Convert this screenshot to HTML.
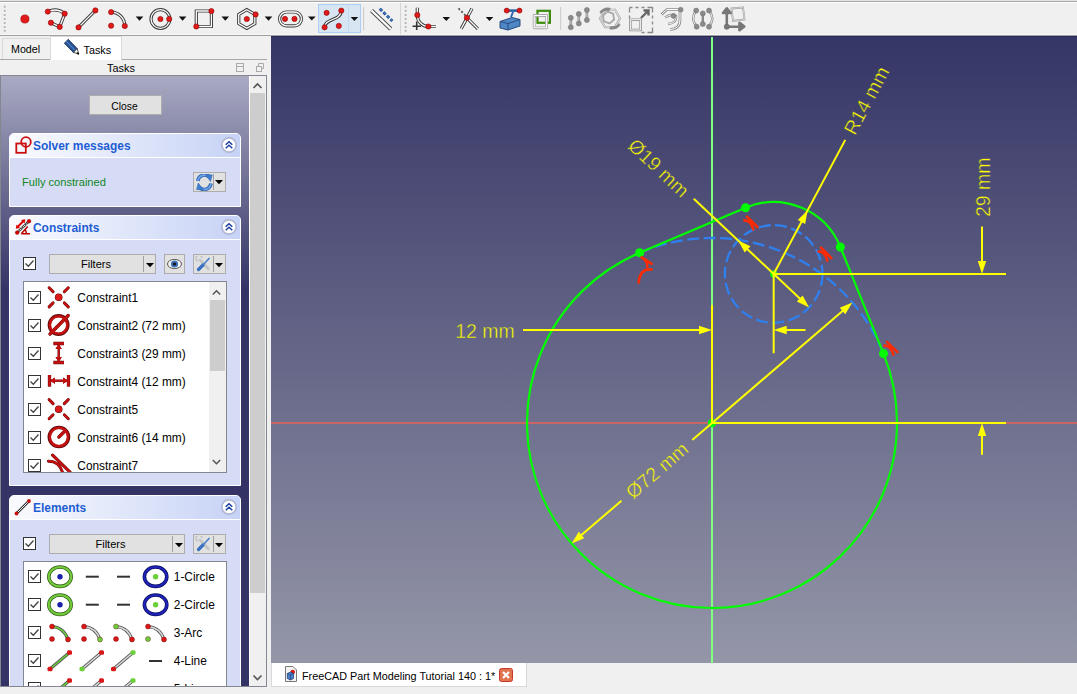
<!DOCTYPE html><html><head><meta charset="utf-8"><style>
*{margin:0;padding:0;box-sizing:border-box}
html,body{width:1077px;height:694px;overflow:hidden;background:#f0f0f0;font-family:"Liberation Sans",sans-serif;font-size:11px;color:#000}
.a{position:absolute}
.t{position:absolute;white-space:nowrap;line-height:1}
</style></head><body><div class="a" style="left:0;top:0;width:1077px;height:1px;background:#e2e2e2"></div>
<div class="a" style="left:0;top:1px;width:1077px;height:1px;background:#a8a8a8"></div>
<div class="a" style="left:0;top:2px;width:1077px;height:1px;background:#ffffff"></div>
<div class="a" style="left:0;top:34px;width:1077px;height:1px;background:#f8f8f8"></div>
<div class="a" style="left:0;top:35px;width:1077px;height:1px;background:#a0a0a0"></div>
<svg class="a" style="left:0;top:0" width="760" height="36" viewBox="0 0 760 36">
<rect x="3.8" y="5.8" width="1.8" height="1.8" fill="#b0b0b0"/>
<rect x="3.8" y="9.899999999999999" width="1.8" height="1.8" fill="#b0b0b0"/>
<rect x="3.8" y="14.1" width="1.8" height="1.8" fill="#b0b0b0"/>
<rect x="3.8" y="18.2" width="1.8" height="1.8" fill="#b0b0b0"/>
<rect x="3.8" y="22.099999999999998" width="1.8" height="1.8" fill="#b0b0b0"/>
<rect x="3.8" y="26.099999999999998" width="1.8" height="1.8" fill="#b0b0b0"/>
<rect x="3.8" y="29.9" width="1.8" height="1.8" fill="#b0b0b0"/>
<rect x="404.7" y="5.8" width="1.8" height="1.8" fill="#b0b0b0"/>
<rect x="404.7" y="9.899999999999999" width="1.8" height="1.8" fill="#b0b0b0"/>
<rect x="404.7" y="14.1" width="1.8" height="1.8" fill="#b0b0b0"/>
<rect x="404.7" y="18.2" width="1.8" height="1.8" fill="#b0b0b0"/>
<rect x="404.7" y="22.099999999999998" width="1.8" height="1.8" fill="#b0b0b0"/>
<rect x="404.7" y="26.099999999999998" width="1.8" height="1.8" fill="#b0b0b0"/>
<rect x="404.7" y="29.9" width="1.8" height="1.8" fill="#b0b0b0"/>
<circle cx="24.9" cy="19" r="4.1" fill="#e21a1a" stroke="#a00000" stroke-width="0.6"/>
<path d="M47.8,11.6 Q57,7.5 64.7,13.7 L59.7,26.9 L50.9,22.7" fill="none" stroke="#3a3a3a" stroke-width="3.2" stroke-linejoin="round"/><path d="M47.8,11.6 Q57,7.5 64.7,13.7 L59.7,26.9 L50.9,22.7" fill="none" stroke="#ffffff" stroke-width="1.3" stroke-linejoin="round"/>
<circle cx="47.8" cy="11.6" r="2.6" fill="#e21a1a" stroke="#8a0000" stroke-width="0.6"/>
<circle cx="64.7" cy="13.7" r="2.6" fill="#e21a1a" stroke="#8a0000" stroke-width="0.6"/>
<circle cx="59.7" cy="26.9" r="2.6" fill="#e21a1a" stroke="#8a0000" stroke-width="0.6"/>
<circle cx="50.9" cy="22.7" r="2.6" fill="#e21a1a" stroke="#8a0000" stroke-width="0.6"/>
<path d="M78.5,27.4 L95.4,10.4" fill="none" stroke="#3a3a3a" stroke-width="3.2" stroke-linejoin="round"/><path d="M78.5,27.4 L95.4,10.4" fill="none" stroke="#ffffff" stroke-width="1.3" stroke-linejoin="round"/>
<circle cx="78.5" cy="27.4" r="2.6" fill="#e21a1a" stroke="#8a0000" stroke-width="0.6"/>
<circle cx="95.4" cy="10.4" r="2.6" fill="#e21a1a" stroke="#8a0000" stroke-width="0.6"/>
<path d="M111.1,12.1 A13.8,13.8 0 0 1 124.8,26" fill="none" stroke="#3a3a3a" stroke-width="3.2" stroke-linejoin="round"/><path d="M111.1,12.1 A13.8,13.8 0 0 1 124.8,26" fill="none" stroke="#ffffff" stroke-width="1.3" stroke-linejoin="round"/>
<circle cx="111.1" cy="12.1" r="2.6" fill="#e21a1a" stroke="#8a0000" stroke-width="0.6"/>
<circle cx="111.1" cy="25.7" r="2.6" fill="#e21a1a" stroke="#8a0000" stroke-width="0.6"/>
<circle cx="124.8" cy="26" r="2.6" fill="#e21a1a" stroke="#8a0000" stroke-width="0.6"/>
<polygon points="135.7,16.6 143.3,16.6 139.5,20.8" fill="#111"/>
<circle cx="160.4" cy="19" r="9.4" fill="none" stroke="#3a3a3a" stroke-width="3.2"/><circle cx="160.4" cy="19" r="9.4" fill="none" stroke="#fff" stroke-width="1.3"/>
<circle cx="160.4" cy="19" r="2.6" fill="#e21a1a" stroke="#8a0000" stroke-width="0.6"/>
<circle cx="169.2" cy="19" r="2.6" fill="#e21a1a" stroke="#8a0000" stroke-width="0.6"/>
<polygon points="178.79999999999998,16.6 186.4,16.6 182.6,20.8" fill="#111"/>
<path d="M196.3,11 L211.4,11 L211.4,26.5 L196.3,26.5 Z" fill="none" stroke="#3a3a3a" stroke-width="3.2" stroke-linejoin="miter"/><path d="M196.3,11 L211.4,11 L211.4,26.5 L196.3,26.5 Z" fill="none" stroke="#ffffff" stroke-width="1.3" stroke-linejoin="miter"/>
<circle cx="211.4" cy="11.1" r="2.6" fill="#e21a1a" stroke="#8a0000" stroke-width="0.6"/>
<circle cx="196.3" cy="26.5" r="2.6" fill="#e21a1a" stroke="#8a0000" stroke-width="0.6"/>
<polygon points="221.5,16.6 229.10000000000002,16.6 225.3,20.8" fill="#111"/>
<polygon points="246.80,9.70 254.85,14.35 254.85,23.65 246.80,28.30 238.75,23.65 238.75,14.35" fill="none" stroke="#3a3a3a" stroke-width="3.2"/><polygon points="246.80,9.70 254.85,14.35 254.85,23.65 246.80,28.30 238.75,23.65 238.75,14.35" fill="none" stroke="#fff" stroke-width="1.3"/>
<circle cx="246.8" cy="19" r="2.6" fill="#e21a1a" stroke="#8a0000" stroke-width="0.6"/>
<circle cx="255.6" cy="14.4" r="2.6" fill="#e21a1a" stroke="#8a0000" stroke-width="0.6"/>
<polygon points="264.7,16.6 272.3,16.6 268.5,20.8" fill="#111"/>
<path d="M286.5,12 L294.5,12 A6.9,6.9 0 0 1 294.5,25.8 L286.5,25.8 A6.9,6.9 0 0 1 286.5,12 Z" fill="none" stroke="#3a3a3a" stroke-width="3.2" stroke-linejoin="round"/><path d="M286.5,12 L294.5,12 A6.9,6.9 0 0 1 294.5,25.8 L286.5,25.8 A6.9,6.9 0 0 1 286.5,12 Z" fill="none" stroke="#ffffff" stroke-width="1.3" stroke-linejoin="round"/>
<circle cx="285" cy="18.9" r="2.6" fill="#e21a1a" stroke="#8a0000" stroke-width="0.6"/>
<circle cx="294.5" cy="18.9" r="2.6" fill="#e21a1a" stroke="#8a0000" stroke-width="0.6"/>
<polygon points="308.0,16.4 315.6,16.4 311.8,20.599999999999998" fill="#111"/>
<rect x="318.5" y="4.5" width="42" height="28" fill="#d8e6f3" stroke="#a9d0f2" stroke-width="1"/>
<line x1="348.5" y1="5" x2="348.5" y2="32" stroke="#bfdcf4" stroke-width="1"/>
<path d="M324.6,27.3 C325,18 341,21 341.3,10.6" fill="none" stroke="#3a3a3a" stroke-width="3.2" stroke-linejoin="round"/><path d="M324.6,27.3 C325,18 341,21 341.3,10.6" fill="none" stroke="#ffffff" stroke-width="1.3" stroke-linejoin="round"/>
<circle cx="326.6" cy="12.8" r="2.6" fill="#e21a1a" stroke="#8a0000" stroke-width="0.6"/>
<circle cx="341.3" cy="10.6" r="2.6" fill="#e21a1a" stroke="#8a0000" stroke-width="0.6"/>
<circle cx="324.6" cy="27.3" r="2.6" fill="#e21a1a" stroke="#8a0000" stroke-width="0.6"/>
<circle cx="338.8" cy="25.9" r="2.6" fill="#e21a1a" stroke="#8a0000" stroke-width="0.6"/>
<polygon points="350.59999999999997,16.9 358.2,16.9 354.4,21.099999999999998" fill="#111"/>
<line x1="363.6" y1="7" x2="363.6" y2="30" stroke="#c8c8c8" stroke-width="1"/>
<path d="M371.5,10.5 L390.8,29" fill="none" stroke="#4a4a4a" stroke-width="4.2" stroke-linejoin="round"/><path d="M371.5,10.5 L390.8,29" fill="none" stroke="#ffffff" stroke-width="2.4" stroke-linejoin="round"/>
<line x1="379.8" y1="8.8" x2="392.3" y2="21" stroke="#24498a" stroke-width="3" stroke-dasharray="3.2,1.8"/><line x1="379.8" y1="8.8" x2="392.3" y2="21" stroke="#3f78c8" stroke-width="1.4" stroke-dasharray="3.2,1.8"/>
<line x1="400.5" y1="3" x2="400.5" y2="34" stroke="#d4d4d4" stroke-width="1"/>
<path d="M417.3,7.8 L417.3,15 A11.3,11.3 0 0 0 428.4,26.5 L435.7,26.5" fill="none" stroke="#3a3a3a" stroke-width="3.2" stroke-linejoin="round"/><path d="M417.3,7.8 L417.3,15 A11.3,11.3 0 0 0 428.4,26.5 L435.7,26.5" fill="none" stroke="#ffffff" stroke-width="1.3" stroke-linejoin="round"/>
<circle cx="417.3" cy="15" r="2.6" fill="#e21a1a" stroke="#8a0000" stroke-width="0.6"/>
<circle cx="428.4" cy="26.5" r="2.6" fill="#e21a1a" stroke="#8a0000" stroke-width="0.6"/>
<path d="M416.7,21.5 V30 M412.5,26.2 H421" stroke="#333" stroke-width="1.6"/>
<polygon points="442.5,16.9 450.1,16.9 446.3,21.099999999999998" fill="#111"/>
<path d="M472,8.6 L461.2,28.8" fill="none" stroke="#3a3a3a" stroke-width="3.2" stroke-linejoin="round"/><path d="M472,8.6 L461.2,28.8" fill="none" stroke="#ffffff" stroke-width="1.3" stroke-linejoin="round"/>
<path d="M466.9,17.8 L477.8,28.8" fill="none" stroke="#3a3a3a" stroke-width="3.2" stroke-linejoin="round"/><path d="M466.9,17.8 L477.8,28.8" fill="none" stroke="#ffffff" stroke-width="1.3" stroke-linejoin="round"/>
<path d="M458.5,8.4 L466,16" stroke="#555" stroke-width="1.8" stroke-dasharray="2,2"/>
<circle cx="466.9" cy="17.8" r="2.6" fill="#e21a1a" stroke="#8a0000" stroke-width="0.6"/>
<polygon points="485.7,16.9 493.3,16.9 489.5,21.099999999999998" fill="#111"/>
<rect x="507" y="9.3" width="12.5" height="2.6" fill="#2e62a8"/>
<path d="M513,12 L511,17" stroke="#2e62a8" stroke-width="2"/>
<path d="M500,21.5 L512,17.5 L520,19.5 L520,26 L508,30 L500,28 Z" fill="#4f86c6" stroke="#1e3f73" stroke-width="0.9"/>
<path d="M500,21.5 L508,23.5 L520,19.5 M508,23.5 L508,30" fill="none" stroke="#1e3f73" stroke-width="0.8"/>
<circle cx="506.7" cy="10.6" r="2.5" fill="#e21a1a" stroke="#8a0000" stroke-width="0.6"/>
<circle cx="519.5" cy="10.6" r="2.5" fill="#e21a1a" stroke="#8a0000" stroke-width="0.6"/>
<rect x="537.5" y="10.8" width="12.4" height="12" fill="none" stroke="#3b8c0b" stroke-width="2.2"/>
<path d="M534.2,15.5 L546.6,15.5 L546.6,27.8 L534.2,27.8 Z" fill="none" stroke="#a8a8a8" stroke-width="2.8" stroke-linejoin="round"/><path d="M534.2,15.5 L546.6,15.5 L546.6,27.8 L534.2,27.8 Z" fill="none" stroke="#ffffff" stroke-width="1.1" stroke-linejoin="round"/>
<line x1="560.7" y1="7" x2="560.7" y2="30" stroke="#c8c8c8" stroke-width="1"/>
<line x1="570.8" y1="17.8" x2="570.8" y2="27.3" stroke="#8a8a8a" stroke-width="2.6"/><line x1="570.8" y1="17.8" x2="570.8" y2="27.3" stroke="#ddd" stroke-width="0.8"/>
<circle cx="570.8" cy="17.8" r="2.5" fill="#8a8a8a" stroke="#777" stroke-width="0.6"/>
<circle cx="570.8" cy="27.3" r="2.5" fill="#8a8a8a" stroke="#777" stroke-width="0.6"/>
<line x1="578.8" y1="13.9" x2="578.8" y2="23.4" stroke="#8a8a8a" stroke-width="2.6"/><line x1="578.8" y1="13.9" x2="578.8" y2="23.4" stroke="#ddd" stroke-width="0.8"/>
<circle cx="578.8" cy="13.9" r="2.5" fill="#8a8a8a" stroke="#777" stroke-width="0.6"/>
<circle cx="578.8" cy="23.4" r="2.5" fill="#8a8a8a" stroke="#777" stroke-width="0.6"/>
<line x1="586.9" y1="10" x2="586.9" y2="20" stroke="#8a8a8a" stroke-width="2.6"/><line x1="586.9" y1="10" x2="586.9" y2="20" stroke="#ddd" stroke-width="0.8"/>
<circle cx="586.9" cy="10" r="2.5" fill="#8a8a8a" stroke="#777" stroke-width="0.6"/>
<circle cx="586.9" cy="20" r="2.5" fill="#8a8a8a" stroke="#777" stroke-width="0.6"/>
<polygon points="620.00,18.40 615.00,27.06 605.00,27.06 600.00,18.40 605.00,9.74 615.00,9.74" fill="none" stroke="#a8a8a8" stroke-width="2.2"/><polygon points="620.00,18.40 615.00,27.06 605.00,27.06 600.00,18.40 605.00,9.74 615.00,9.74" fill="none" stroke="#f4f4f4" stroke-width="0.8"/>
<polygon points="614.14,19.55 609.54,23.41 603.90,21.36 602.86,15.45 607.46,11.59 613.10,13.64" fill="none" stroke="#a8a8a8" stroke-width="1.8"/>
<path d="M599.5,12 Q604,6 611,8 L609,11 Q604,10 601,14 Z" fill="#888"/><path d="M620.5,25 Q616,31 609,29 L611,26 Q616,27 619,23 Z" fill="#888"/>
<path d="M629.5,7.5 h3 m3,0 h3 m3,0 h3 m3,0 h5 v5 m0,3 v3 m0,3 v3 m0,3 v5 h-5 m-3,0 h-3 M629.5,7.5 v5 m0,3 v3" fill="none" stroke="#888" stroke-width="1.3"/>
<path d="M630.3,19.7 H640.7 V30 H630.3 Z" fill="none" stroke="#8a8a8a" stroke-width="2.6" stroke-linejoin="round"/><path d="M630.3,19.7 H640.7 V30 H630.3 Z" fill="none" stroke="#ffffff" stroke-width="1.0" stroke-linejoin="round"/>
<path d="M641,18 L647.5,11.5 M643.5,10.5 H648.5 V15.5" fill="none" stroke="#666" stroke-width="2.4"/>
<path d="M661.5,14.5 L667,9.5 H680 V20 Q680,29 670,29.5" fill="none" stroke="#8a8a8a" stroke-width="2.6" stroke-linejoin="round"/><path d="M661.5,14.5 L667,9.5 H680 V20 Q680,29 670,29.5" fill="none" stroke="#ffffff" stroke-width="1.0" stroke-linejoin="round"/>
<path d="M665,17.5 Q672,13 676,16 Q677,23 668,24" fill="none" stroke="#8a8a8a" stroke-width="2.4" stroke-linejoin="round"/><path d="M665,17.5 Q672,13 676,16 Q677,23 668,24" fill="none" stroke="#ffffff" stroke-width="0.9" stroke-linejoin="round"/>
<circle cx="680.7" cy="9.7" r="2.4" fill="#8a8a8a" stroke="#777" stroke-width="0.6"/>
<circle cx="673.5" cy="16" r="2.4" fill="#8a8a8a" stroke="#777" stroke-width="0.6"/>
<path d="M696.2,10.6 Q690,18.6 696.7,26.7" fill="none" stroke="#8a8a8a" stroke-width="2.4" stroke-linejoin="round"/><path d="M696.2,10.6 Q690,18.6 696.7,26.7" fill="none" stroke="#ffffff" stroke-width="0.9" stroke-linejoin="round"/>
<path d="M709,10.6 Q715.5,18.6 709,26.7" fill="none" stroke="#8a8a8a" stroke-width="2.4" stroke-linejoin="round"/><path d="M709,10.6 Q715.5,18.6 709,26.7" fill="none" stroke="#ffffff" stroke-width="0.9" stroke-linejoin="round"/>
<line x1="702.8" y1="13.4" x2="702.8" y2="24" stroke="#8a8a8a" stroke-width="2.4"/>
<circle cx="696.2" cy="10.6" r="2.5" fill="#8a8a8a" stroke="#777" stroke-width="0.6"/>
<circle cx="709" cy="10.6" r="2.5" fill="#8a8a8a" stroke="#777" stroke-width="0.6"/>
<circle cx="702.8" cy="13.4" r="2.5" fill="#8a8a8a" stroke="#777" stroke-width="0.6"/>
<circle cx="702.8" cy="24" r="2.5" fill="#8a8a8a" stroke="#777" stroke-width="0.6"/>
<circle cx="696.7" cy="26.7" r="2.5" fill="#8a8a8a" stroke="#777" stroke-width="0.6"/>
<circle cx="709" cy="26.7" r="2.5" fill="#8a8a8a" stroke="#777" stroke-width="0.6"/>
<path d="M731.5,8.5 L743,7.5 L744.5,19.5 L733,21 Z" fill="none" stroke="#9a9a9a" stroke-width="1.8"/><path d="M731.5,8.5 L743,7.5 L744.5,19.5 L733,21 Z" fill="none" stroke="#f4f4f4" stroke-width="0.6"/>
<path d="M726.8,26.7 V12 M723,13 L726.8,8.3 L730.6,13 Z M726.8,26.7 H740 M739.5,22.8 L744.3,26.5 L739.5,30.2 Z" fill="#777" stroke="#777" stroke-width="2.6" stroke-linejoin="round"/>
<circle cx="726.8" cy="26.7" r="2.6" fill="#777" stroke="#666" stroke-width="0.6"/>
</svg>
<div class="a" style="left:271px;top:36px;width:806px;height:627px;background:linear-gradient(#353566,#9496a8)"></div>
<div class="a" style="left:271px;top:36px;width:806px;height:1px;background:#2a2a5c"></div>
<div class="a" style="left:271px;top:663px;width:256px;height:24px;background:#fff;border:1px solid #d9d9d9;border-top:none"></div>
<div class="t" style="left:302px;top:671px;font-size:10.8px;color:#000">FreeCAD Part Modeling Tutorial 140 : 1*</div>
<svg class="a" style="left:284px;top:665px" width="14" height="18" viewBox="284 665 14 18"><path d="M285.5,666.5 H293 L296.5,670 V681.5 H285.5 Z" fill="#f4f4f4" stroke="#777" stroke-width="1"/><circle cx="292.7" cy="672" r="2.3" fill="#e01818"/><path d="M287.3,673.5 L290.5,672 L293.5,673.5 V678.5 L290.5,680 L287.3,678.5 Z" fill="#4a7fcc" stroke="#1a3563" stroke-width="0.7"/><path d="M287.3,673.5 L290.5,675 L293.5,673.5 M290.5,675 V680" fill="none" stroke="#1a3563" stroke-width="0.6"/></svg>
<svg class="a" style="left:498px;top:667px" width="16" height="16" viewBox="498 667 16 16"><rect x="499.5" y="668.5" width="13" height="13" rx="2" fill="#e0744e" stroke="#c8382a" stroke-width="1"/><path d="M503,672 L509,678 M509,672 L503,678" stroke="#fff" stroke-width="2.2"/></svg>
<div class="a" style="left:0;top:59px;width:267px;height:1px;background:#a9a9a9"></div>
<div class="a" style="left:2px;top:38px;width:49px;height:21px;background:#f0f0f0;border:1px solid #d9d9d9;border-bottom:none"></div>
<div class="a" style="left:50px;top:36px;width:72px;height:24px;background:#fff;border:1px solid #d9d9d9;border-bottom:none"></div>
<div class="t" style="left:11px;top:44px;font-size:10.7px">Model</div>
<div class="t" style="left:83.5px;top:44.6px;font-size:10.8px">Tasks</div>
<svg class="a" style="left:62px;top:37px" width="20" height="20" viewBox="62 37 20 20"><path d="M64.3,43.2 L68.3,39.3 L77.2,48.6 L73.4,52.4 Z" fill="#2a5596" stroke="#14284a" stroke-width="0.8"/><path d="M66.3,41.3 L75.2,50.5" stroke="#5b8fd6" stroke-width="1"/><path d="M73.4,52.4 L77.2,48.6 L78.8,54 Z" fill="#fff" stroke="#222" stroke-width="0.8"/><path d="M77.3,52.6 L78.8,54 L77.4,53.8 Z" fill="#000" stroke="#000" stroke-width="1"/></svg>
<div class="t" style="left:107px;top:62.5px;font-size:10.9px">Tasks</div>
<svg class="a" style="left:234px;top:60px" width="30" height="14" viewBox="234 60 30 14"><rect x="236.5" y="63.5" width="7" height="8" fill="none" stroke="#aaa" stroke-width="1"/><line x1="236.5" y1="66.5" x2="243.5" y2="66.5" stroke="#aaa"/><rect x="256.5" y="66.5" width="5" height="5" fill="none" stroke="#aaa"/><path d="M258.5,66.5 V63.5 H263.5 V68.5 H261.5" fill="none" stroke="#aaa"/></svg>
<div class="a" style="left:0;top:75px;width:267px;height:612px;border:1px solid #828790;background:linear-gradient(#a9aac2 0px,#333366 214px,#333366 612px)"></div>
<div class="a" style="left:249px;top:76px;width:17px;height:610px;background:#f0f0f0;border-left:1px solid #fff"></div>
<div class="a" style="left:250px;top:93px;width:15px;height:500px;background:#cdcdcd"></div>
<svg class="a" style="left:251px;top:80px" width="13" height="12" viewBox="251 80 13 12"><path d="M253.5,88 L257.5,84 L261.5,88" fill="none" stroke="#555" stroke-width="1.6"/></svg>
<svg class="a" style="left:251px;top:672px" width="13" height="12" viewBox="251 672 13 12"><path d="M253.5,675.5 L257.5,679.5 L261.5,675.5" fill="none" stroke="#555" stroke-width="1.6"/></svg>
<div class="a" style="left:1px;top:76px;width:248px;height:610px;overflow:hidden"><div class="a" style="left:-1px;top:-76px;width:267px;height:700px">
<div class="a" style="left:89px;top:95px;width:73px;height:20px;background:#e1e1e1;border:1px solid #adadad"></div>
<div class="t" style="left:88px;top:101.6px;width:73px;text-align:center;font-size:10.3px">Close</div>
<div class="a" style="left:9px;top:133px;width:232px;height:74px;background:#d6dcf5;border:1px solid #fff;border-radius:5px 5px 0 0"></div><div class="a" style="left:10px;top:134px;width:230px;height:24px;background:linear-gradient(90deg,#fafbfe,#c7d3f6);border-radius:4px 4px 0 0;border-bottom:1px solid #fff"></div><div class="t" style="left:33px;top:141.1px;font-size:11.95px;font-weight:bold;color:#1e5dd3">Solver messages</div><svg class="a" style="left:220px;top:136.4px" width="18" height="18" viewBox="220 136.4 18 18"><circle cx="229" cy="145.4" r="7.2" fill="#fff" stroke="#b4bbd8" stroke-width="1.9"/><path d="M225.7,145.1 L229,142.1 L232.3,145.1 M225.7,148.6 L229,145.6 L232.3,148.6" fill="none" stroke="#1b3fa0" stroke-width="1.5"/></svg><svg class="a" style="left:14px;top:136px" width="18" height="18" viewBox="14 136 18 18"><rect x="16.3" y="143.5" width="9.5" height="9.3" fill="none" stroke="#cc1010" stroke-width="1.8"/><circle cx="26" cy="142" r="4.8" fill="none" stroke="#cc1010" stroke-width="1.8"/></svg>
<div class="t" style="left:22px;top:177px;font-size:11.1px;color:#0f8626">Fully constrained</div>
<div class="a" style="left:193px;top:172px;width:33px;height:20px;background:#e1e1e1;border:1px solid #adadad"></div>
<div class="a" style="left:213px;top:174px;width:1px;height:16px;background:#a0a0a0"></div>
<svg class="a" style="left:195px;top:174px" width="18" height="17" viewBox="195 174 18 17"><path d="M197.8,181 A6.8,6.8 0 0 1 209.5,177.2" fill="none" stroke="#2e64b4" stroke-width="3.6"/><path d="M197.8,181 A6.8,6.8 0 0 1 209.5,177.2" fill="none" stroke="#6fa3e6" stroke-width="1.8"/><polygon points="205.5,174.5 212.2,175 210.5,181.5" fill="#3f7fd0" stroke="#2e64b4" stroke-width="0.6"/><path d="M211,183.5 A6.8,6.8 0 0 1 199.3,187.3" fill="none" stroke="#2e64b4" stroke-width="3.6"/><path d="M211,183.5 A6.8,6.8 0 0 1 199.3,187.3" fill="none" stroke="#6fa3e6" stroke-width="1.8"/><polygon points="203.3,190 196.6,189.5 198.3,183" fill="#3f7fd0" stroke="#2e64b4" stroke-width="0.6"/></svg>
<svg class="a" style="left:214.3px;top:178.3px" width="10" height="8" viewBox="214.3 178.3 10 8"><polygon points="215.3,180.3 223.3,180.3 219.3,184.60000000000002" fill="#000"/></svg>
<div class="a" style="left:9px;top:215px;width:232px;height:271px;background:#d6dcf5;border:1px solid #fff;border-radius:5px 5px 0 0"></div><div class="a" style="left:10px;top:216px;width:230px;height:24px;background:linear-gradient(90deg,#fafbfe,#c7d3f6);border-radius:4px 4px 0 0;border-bottom:1px solid #fff"></div><div class="t" style="left:33px;top:223.1px;font-size:11.95px;font-weight:bold;color:#1e5dd3">Constraints</div><svg class="a" style="left:220px;top:218.4px" width="18" height="18" viewBox="220 218.4 18 18"><circle cx="229" cy="227.4" r="7.2" fill="#fff" stroke="#b4bbd8" stroke-width="1.9"/><path d="M225.7,227.1 L229,224.1 L232.3,227.1 M225.7,230.6 L229,227.6 L232.3,230.6" fill="none" stroke="#1b3fa0" stroke-width="1.5"/></svg><svg class="a" style="left:14px;top:218px" width="18" height="18" viewBox="14 218 18 18"><path d="M17.2,232.6 L29,221.2" stroke="#333" stroke-width="2.4"/><path d="M17.2,232.6 L29,221.2" stroke="#fff" stroke-width="1.2" stroke-dasharray="1,1"/><circle cx="17.2" cy="232.6" r="1.9" fill="#d80000" stroke="#700" stroke-width="0.4"/><circle cx="29" cy="221.2" r="1.9" fill="#d80000" stroke="#700" stroke-width="0.4"/><path d="M17.5,227 L23.5,221" stroke="#dd0000" stroke-width="2"/><polygon points="15.8,228.8 16.5,224.5 20,228" fill="#dd0000"/><polygon points="25.3,219.3 21,220 24.6,223.5" fill="#dd0000"/><path d="M21.3,233.7 H30 M21.3,233.7 L27.7,226.4 M25,229.5 Q26.5,231.5 26.3,233.7" fill="none" stroke="#bb0000" stroke-width="1.5"/></svg>
<div class="a" style="left:23px;top:257px;width:13px;height:13px;background:#fff;border:1px solid #333"></div><svg class="a" style="left:23px;top:257px" width="13" height="13" viewBox="23 257 13 13"><path d="M25.5,263.5 L28.3,266.3 L33.5,260.5" fill="none" stroke="#444" stroke-width="1.3"/></svg>
<div class="a" style="left:49px;top:254px;width:107px;height:20px;background:#e1e1e1;border:1px solid #adadad"></div><div class="a" style="left:143px;top:256px;width:1px;height:16px;background:#a0a0a0"></div><div class="t" style="left:49px;top:259px;width:94px;text-align:center;font-size:11px">Filters</div><svg class="a" style="left:144.5px;top:260.5px" width="10" height="8" viewBox="144.5 260.5 10 8"><polygon points="145.5,262.5 153.5,262.5 149.5,266.8" fill="#000"/></svg>
<div class="a" style="left:164px;top:254px;width:21px;height:20px;background:#e1e1e1;border:1px solid #adadad"></div>
<svg class="a" style="left:166px;top:256px" width="18" height="16" viewBox="166 256 18 16"><ellipse cx="174.5" cy="264" rx="7" ry="4.6" fill="#f4f4f4" stroke="#555" stroke-width="1"/><circle cx="174.5" cy="264" r="3.6" fill="#3d6fb8"/><circle cx="174.5" cy="264" r="1.6" fill="#111"/></svg>
<div class="a" style="left:193px;top:254px;width:33px;height:20px;background:#e1e1e1;border:1px solid #adadad"></div><div class="a" style="left:213px;top:256px;width:1px;height:16px;background:#a0a0a0"></div><svg class="a" style="left:195px;top:256px" width="18" height="16" viewBox="195 256 18 16"><path d="M200,260 L208.5,269" stroke="#c4c4c4" stroke-width="2.6" stroke-linecap="round"/><path d="M198,261 A3,3 0 1 1 202,258" fill="none" stroke="#c4c4c4" stroke-width="1.6"/><path d="M198.5,269.5 L203,265" stroke="#3a70c0" stroke-width="3.2" stroke-linecap="round"/><path d="M203,265 L209.5,258" stroke="#4a80cc" stroke-width="1.6"/></svg><svg class="a" style="left:214.3px;top:260.5px" width="10" height="8" viewBox="214.3 260.5 10 8"><polygon points="215.3,262.5 223.3,262.5 219.3,266.8" fill="#000"/></svg>
<div class="a" style="left:23px;top:281px;width:204px;height:192px;background:#fff;border:1px solid #828790"></div>
<div class="a" style="left:209px;top:282px;width:17px;height:190px;background:#f0f0f0"></div>
<div class="a" style="left:209.5px;top:299.5px;width:15px;height:71px;background:#cdcdcd"></div>
<svg class="a" style="left:210px;top:286px" width="14" height="12" viewBox="210 286 14 12"><path d="M212.8,294.5 L216.5,290.8 L220.2,294.5" fill="none" stroke="#555" stroke-width="1.5"/></svg>
<svg class="a" style="left:210px;top:457px" width="14" height="12" viewBox="210 457 14 12"><path d="M212.8,460 L216.5,463.7 L220.2,460" fill="none" stroke="#555" stroke-width="1.5"/></svg>
<div class="a" style="left:24px;top:282px;width:185px;height:190px;overflow:hidden"><div class="a" style="left:-24px;top:-282px;width:260px;height:500px">
<div class="a" style="left:28px;top:291px;width:13px;height:13px;background:#fff;border:1px solid #333"></div><svg class="a" style="left:28px;top:291px" width="13" height="13" viewBox="28 291 13 13"><path d="M30.5,297.5 L33.3,300.3 L38.5,294.5" fill="none" stroke="#444" stroke-width="1.3"/></svg>
<svg class="a" style="left:44px;top:283px" width="30" height="30" viewBox="44 283 30 30"><path d="M49.1,287.7 L53.1,291.7 M68.3,287.7 L64.3,291.7 M49.1,306.90000000000003 L53.1,302.90000000000003 M68.3,306.90000000000003 L64.3,302.90000000000003" stroke="#5c0808" stroke-width="2.90" stroke-linecap="round"/><circle cx="58.7" cy="297.3" r="3.80" fill="#5c0808"/><path d="M49.1,287.7 L53.1,291.7 M68.3,287.7 L64.3,291.7 M49.1,306.90000000000003 L53.1,302.90000000000003 M68.3,306.90000000000003 L64.3,302.90000000000003" stroke="#c41010" stroke-width="2.2" stroke-linecap="round"/><circle cx="58.7" cy="297.3" r="3.3" fill="#dd1a1a"/></svg>
<div class="t" style="left:77.3px;top:292.8px;font-size:11.9px">Constraint1</div>
<div class="a" style="left:28px;top:319px;width:13px;height:13px;background:#fff;border:1px solid #333"></div><svg class="a" style="left:28px;top:319px" width="13" height="13" viewBox="28 319 13 13"><path d="M30.5,325.5 L33.3,328.3 L38.5,322.5" fill="none" stroke="#444" stroke-width="1.3"/></svg>
<svg class="a" style="left:44px;top:311px" width="30" height="30" viewBox="44 311 30 30"><circle cx="58.6" cy="325" r="9.30" fill="none" stroke="#5c0808" stroke-width="3.30"/><path d="M50,334 L68.2,315.5" stroke="#5c0808" stroke-width="3.30" stroke-linecap="round"/><circle cx="58.6" cy="325" r="8.8" fill="none" stroke="#c41010" stroke-width="2.6"/><path d="M50,334 L68.2,315.5" stroke="#c41010" stroke-width="2.6" stroke-linecap="round"/></svg>
<div class="t" style="left:77.3px;top:320.8px;font-size:11.9px">Constraint2 (72 mm)</div>
<div class="a" style="left:28px;top:347px;width:13px;height:13px;background:#fff;border:1px solid #333"></div><svg class="a" style="left:28px;top:347px" width="13" height="13" viewBox="28 347 13 13"><path d="M30.5,353.5 L33.3,356.3 L38.5,350.5" fill="none" stroke="#444" stroke-width="1.3"/></svg>
<svg class="a" style="left:44px;top:339px" width="30" height="30" viewBox="44 339 30 30"><path d="M53.5,343.5 H64 M53.5,362.5 H64" stroke="#5c0808" stroke-width="3.30"/><path d="M58.7,345 V361" stroke="#5c0808" stroke-width="2.30"/><path d="M56.2,348.5 L58.7,345 L61.2,348.5 Z M56.2,357.5 L58.7,361 L61.2,357.5 Z" fill="#5c0808" stroke="#5c0808"/><path d="M53.5,343.5 H64 M53.5,362.5 H64" stroke="#c41010" stroke-width="2.6"/><path d="M58.7,345 V361" stroke="#c41010" stroke-width="1.6"/><path d="M56.2,348.5 L58.7,345 L61.2,348.5 Z M56.2,357.5 L58.7,361 L61.2,357.5 Z" fill="#c41010" stroke="#c41010"/></svg>
<div class="t" style="left:77.3px;top:348.8px;font-size:11.9px">Constraint3 (29 mm)</div>
<div class="a" style="left:28px;top:375px;width:13px;height:13px;background:#fff;border:1px solid #333"></div><svg class="a" style="left:28px;top:375px" width="13" height="13" viewBox="28 375 13 13"><path d="M30.5,381.5 L33.3,384.3 L38.5,378.5" fill="none" stroke="#444" stroke-width="1.3"/></svg>
<svg class="a" style="left:44px;top:367px" width="30" height="30" viewBox="44 367 30 30"><path d="M49.5,375 V386.5 M68.5,375 V386.5" stroke="#5c0808" stroke-width="3.30"/><path d="M51,380.7 H67" stroke="#5c0808" stroke-width="2.30"/><path d="M54.5,378.2 L51,380.7 L54.5,383.2 Z M63.5,378.2 L67,380.7 L63.5,383.2 Z" fill="#5c0808" stroke="#5c0808"/><path d="M49.5,375 V386.5 M68.5,375 V386.5" stroke="#c41010" stroke-width="2.6"/><path d="M51,380.7 H67" stroke="#c41010" stroke-width="1.6"/><path d="M54.5,378.2 L51,380.7 L54.5,383.2 Z M63.5,378.2 L67,380.7 L63.5,383.2 Z" fill="#c41010" stroke="#c41010"/></svg>
<div class="t" style="left:77.3px;top:376.8px;font-size:11.9px">Constraint4 (12 mm)</div>
<div class="a" style="left:28px;top:403px;width:13px;height:13px;background:#fff;border:1px solid #333"></div><svg class="a" style="left:28px;top:403px" width="13" height="13" viewBox="28 403 13 13"><path d="M30.5,409.5 L33.3,412.3 L38.5,406.5" fill="none" stroke="#444" stroke-width="1.3"/></svg>
<svg class="a" style="left:44px;top:395px" width="30" height="30" viewBox="44 395 30 30"><path d="M49.1,399.59999999999997 L53.1,403.59999999999997 M68.3,399.59999999999997 L64.3,403.59999999999997 M49.1,418.8 L53.1,414.8 M68.3,418.8 L64.3,414.8" stroke="#5c0808" stroke-width="2.90" stroke-linecap="round"/><circle cx="58.7" cy="409.2" r="3.80" fill="#5c0808"/><path d="M49.1,399.59999999999997 L53.1,403.59999999999997 M68.3,399.59999999999997 L64.3,403.59999999999997 M49.1,418.8 L53.1,414.8 M68.3,418.8 L64.3,414.8" stroke="#c41010" stroke-width="2.2" stroke-linecap="round"/><circle cx="58.7" cy="409.2" r="3.3" fill="#dd1a1a"/></svg>
<div class="t" style="left:77.3px;top:404.8px;font-size:11.9px">Constraint5</div>
<div class="a" style="left:28px;top:431px;width:13px;height:13px;background:#fff;border:1px solid #333"></div><svg class="a" style="left:28px;top:431px" width="13" height="13" viewBox="28 431 13 13"><path d="M30.5,437.5 L33.3,440.3 L38.5,434.5" fill="none" stroke="#444" stroke-width="1.3"/></svg>
<svg class="a" style="left:44px;top:423px" width="30" height="30" viewBox="44 423 30 30"><circle cx="58.9" cy="437" r="9.70" fill="none" stroke="#5c0808" stroke-width="3.30"/><path d="M58.9,437 L65.5,430.4" stroke="#5c0808" stroke-width="3.30" stroke-linecap="round"/><circle cx="58.9" cy="437" r="9.2" fill="none" stroke="#c41010" stroke-width="2.6"/><path d="M58.9,437 L65.5,430.4" stroke="#c41010" stroke-width="2.6" stroke-linecap="round"/></svg>
<div class="t" style="left:77.3px;top:432.8px;font-size:11.9px">Constraint6 (14 mm)</div>
<div class="a" style="left:28px;top:459px;width:13px;height:13px;background:#fff;border:1px solid #333"></div><svg class="a" style="left:28px;top:459px" width="13" height="13" viewBox="28 459 13 13"><path d="M30.5,465.5 L33.3,468.3 L38.5,462.5" fill="none" stroke="#444" stroke-width="1.3"/></svg>
<svg class="a" style="left:44px;top:451px" width="30" height="30" viewBox="44 451 30 30"><path d="M52.6,455.2 L70,472" stroke="#5c0808" stroke-width="3.10" stroke-linecap="round"/><path d="M48.4,461.2 Q59,461 62.4,472" fill="none" stroke="#5c0808" stroke-width="2.90" stroke-linecap="round"/><path d="M52.6,455.2 L70,472" stroke="#c41010" stroke-width="2.4" stroke-linecap="round"/><path d="M48.4,461.2 Q59,461 62.4,472" fill="none" stroke="#c41010" stroke-width="2.2" stroke-linecap="round"/></svg>
<div class="t" style="left:77.3px;top:460.8px;font-size:11.9px">Constraint7</div>
</div></div>
<div class="a" style="left:9px;top:495px;width:232px;height:225px;background:#d6dcf5;border:1px solid #fff;border-radius:5px 5px 0 0"></div><div class="a" style="left:10px;top:496px;width:230px;height:24px;background:linear-gradient(90deg,#fafbfe,#c7d3f6);border-radius:4px 4px 0 0;border-bottom:1px solid #fff"></div><div class="t" style="left:33px;top:503.1px;font-size:11.95px;font-weight:bold;color:#1e5dd3">Elements</div><svg class="a" style="left:220px;top:498.4px" width="18" height="18" viewBox="220 498.4 18 18"><circle cx="229" cy="507.4" r="7.2" fill="#fff" stroke="#b4bbd8" stroke-width="1.9"/><path d="M225.7,507.09999999999997 L229,504.09999999999997 L232.3,507.09999999999997 M225.7,510.59999999999997 L229,507.59999999999997 L232.3,510.59999999999997" fill="none" stroke="#1b3fa0" stroke-width="1.5"/></svg><svg class="a" style="left:14px;top:498px" width="18" height="18" viewBox="14 498 18 18"><path d="M16.5,513.5 L29,501" stroke="#333" stroke-width="2.6"/><path d="M16.5,513.5 L29,501" stroke="#eee" stroke-width="1"/><circle cx="16.5" cy="513.5" r="1.9" fill="#cc1010"/><circle cx="29" cy="501" r="1.9" fill="#cc1010"/></svg>
<div class="a" style="left:23px;top:537px;width:13px;height:13px;background:#fff;border:1px solid #333"></div><svg class="a" style="left:23px;top:537px" width="13" height="13" viewBox="23 537 13 13"><path d="M25.5,543.5 L28.3,546.3 L33.5,540.5" fill="none" stroke="#444" stroke-width="1.3"/></svg>
<div class="a" style="left:49px;top:534px;width:136px;height:20px;background:#e1e1e1;border:1px solid #adadad"></div><div class="a" style="left:172px;top:536px;width:1px;height:16px;background:#a0a0a0"></div><div class="t" style="left:49px;top:539px;width:123px;text-align:center;font-size:11px">Filters</div><svg class="a" style="left:173.5px;top:540.5px" width="10" height="8" viewBox="173.5 540.5 10 8"><polygon points="174.5,542.5 182.5,542.5 178.5,546.8" fill="#000"/></svg>
<div class="a" style="left:193px;top:534px;width:33px;height:20px;background:#e1e1e1;border:1px solid #adadad"></div><div class="a" style="left:213px;top:536px;width:1px;height:16px;background:#a0a0a0"></div><svg class="a" style="left:195px;top:536px" width="18" height="16" viewBox="195 536 18 16"><path d="M200,540 L208.5,549" stroke="#c4c4c4" stroke-width="2.6" stroke-linecap="round"/><path d="M198,541 A3,3 0 1 1 202,538" fill="none" stroke="#c4c4c4" stroke-width="1.6"/><path d="M198.5,549.5 L203,545" stroke="#3a70c0" stroke-width="3.2" stroke-linecap="round"/><path d="M203,545 L209.5,538" stroke="#4a80cc" stroke-width="1.6"/></svg><svg class="a" style="left:214.3px;top:540.5px" width="10" height="8" viewBox="214.3 540.5 10 8"><polygon points="215.3,542.5 223.3,542.5 219.3,546.8" fill="#000"/></svg>
<div class="a" style="left:23px;top:561px;width:204px;height:200px;background:#fff;border:1px solid #828790"></div>
<div class="a" style="left:24px;top:562px;width:202px;height:124px;overflow:hidden"><div class="a" style="left:-24px;top:-562px;width:260px;height:800px">
<div class="a" style="left:28px;top:570px;width:13px;height:13px;background:#fff;border:1px solid #333"></div><svg class="a" style="left:28px;top:570px" width="13" height="13" viewBox="28 570 13 13"><path d="M30.5,576.5 L33.3,579.3 L38.5,573.5" fill="none" stroke="#444" stroke-width="1.3"/></svg>
<svg class="a" style="left:44px;top:562px" width="130" height="30" viewBox="44 562 130 30"><ellipse cx="60" cy="576.7" rx="11.2" ry="9.7" fill="#fff" stroke="#2f5a18" stroke-width="3.6"/><ellipse cx="60" cy="576.7" rx="11.2" ry="9.7" fill="none" stroke="#72c93a" stroke-width="2.2"/><circle cx="60" cy="576.7" r="2.7" fill="#1a1fa8"/><path d="M85.8,576.7 H98.8" stroke="#333" stroke-width="2"/><path d="M117.0,576.7 H130.0" stroke="#333" stroke-width="2"/><ellipse cx="155.6" cy="576.7" rx="11.2" ry="9.7" fill="#fff" stroke="#0a0d55" stroke-width="3.6"/><ellipse cx="155.6" cy="576.7" rx="11.2" ry="9.7" fill="none" stroke="#1e22b8" stroke-width="2.2"/><circle cx="155.6" cy="576.7" r="2.7" fill="#6ad03a"/></svg>
<div class="t" style="left:173.8px;top:571.9px;font-size:11.9px">1-Circle</div>
<div class="a" style="left:28px;top:598px;width:13px;height:13px;background:#fff;border:1px solid #333"></div><svg class="a" style="left:28px;top:598px" width="13" height="13" viewBox="28 598 13 13"><path d="M30.5,604.5 L33.3,607.3 L38.5,601.5" fill="none" stroke="#444" stroke-width="1.3"/></svg>
<svg class="a" style="left:44px;top:590px" width="130" height="30" viewBox="44 590 130 30"><ellipse cx="60" cy="604.7" rx="11.2" ry="9.7" fill="#fff" stroke="#2f5a18" stroke-width="3.6"/><ellipse cx="60" cy="604.7" rx="11.2" ry="9.7" fill="none" stroke="#72c93a" stroke-width="2.2"/><circle cx="60" cy="604.7" r="2.7" fill="#1a1fa8"/><path d="M85.8,604.7 H98.8" stroke="#333" stroke-width="2"/><path d="M117.0,604.7 H130.0" stroke="#333" stroke-width="2"/><ellipse cx="155.6" cy="604.7" rx="11.2" ry="9.7" fill="#fff" stroke="#0a0d55" stroke-width="3.6"/><ellipse cx="155.6" cy="604.7" rx="11.2" ry="9.7" fill="none" stroke="#1e22b8" stroke-width="2.2"/><circle cx="155.6" cy="604.7" r="2.7" fill="#6ad03a"/></svg>
<div class="t" style="left:173.8px;top:599.9px;font-size:11.9px">2-Circle</div>
<div class="a" style="left:28px;top:626px;width:13px;height:13px;background:#fff;border:1px solid #333"></div><svg class="a" style="left:28px;top:626px" width="13" height="13" viewBox="28 626 13 13"><path d="M30.5,632.5 L33.3,635.3 L38.5,629.5" fill="none" stroke="#444" stroke-width="1.3"/></svg>
<svg class="a" style="left:44px;top:618px" width="130" height="30" viewBox="44 618 130 30"><path d="M52,626.5 Q64,627.5 68,639.5" fill="none" stroke="#555" stroke-width="3.2"/><path d="M52,626.5 Q64,627.5 68,639.5" fill="none" stroke="#6ad03a" stroke-width="1.6"/><circle cx="52" cy="626.5" r="2.5" fill="#d81818" stroke="#700" stroke-width="0.4"/><circle cx="52" cy="639.0" r="2.5" fill="#d81818" stroke="#700" stroke-width="0.4"/><circle cx="68" cy="639.5" r="2.5" fill="#d81818" stroke="#700" stroke-width="0.4"/><path d="M84,626.5 Q96,627.5 100,639.5" fill="none" stroke="#555" stroke-width="3.2"/><path d="M84,626.5 Q96,627.5 100,639.5" fill="none" stroke="#ddd" stroke-width="1.6"/><circle cx="84" cy="626.5" r="2.5" fill="#d81818" stroke="#700" stroke-width="0.4"/><circle cx="84" cy="639.0" r="2.5" fill="#d81818" stroke="#700" stroke-width="0.4"/><circle cx="100" cy="639.5" r="2.5" fill="#6ad03a" stroke="#700" stroke-width="0.4"/><path d="M116,626.5 Q128,627.5 132,639.5" fill="none" stroke="#555" stroke-width="3.2"/><path d="M116,626.5 Q128,627.5 132,639.5" fill="none" stroke="#ddd" stroke-width="1.6"/><circle cx="116" cy="626.5" r="2.5" fill="#6ad03a" stroke="#700" stroke-width="0.4"/><circle cx="116" cy="639.0" r="2.5" fill="#d81818" stroke="#700" stroke-width="0.4"/><circle cx="132" cy="639.5" r="2.5" fill="#d81818" stroke="#700" stroke-width="0.4"/><path d="M148,626.5 Q160,627.5 164,639.5" fill="none" stroke="#555" stroke-width="3.2"/><path d="M148,626.5 Q160,627.5 164,639.5" fill="none" stroke="#ddd" stroke-width="1.6"/><circle cx="148" cy="626.5" r="2.5" fill="#d81818" stroke="#700" stroke-width="0.4"/><circle cx="148" cy="639.0" r="2.5" fill="#6ad03a" stroke="#700" stroke-width="0.4"/><circle cx="164" cy="639.5" r="2.5" fill="#d81818" stroke="#700" stroke-width="0.4"/></svg>
<div class="t" style="left:173.8px;top:627.9px;font-size:11.9px">3-Arc</div>
<div class="a" style="left:28px;top:654px;width:13px;height:13px;background:#fff;border:1px solid #333"></div><svg class="a" style="left:28px;top:654px" width="13" height="13" viewBox="28 654 13 13"><path d="M30.5,660.5 L33.3,663.3 L38.5,657.5" fill="none" stroke="#444" stroke-width="1.3"/></svg>
<svg class="a" style="left:44px;top:646px" width="130" height="30" viewBox="44 646 130 30"><path d="M50,669 L69.5,652.5" stroke="#555" stroke-width="3.2"/><path d="M50,669 L69.5,652.5" stroke="#6ad03a" stroke-width="1.6"/><rect x="47.5" y="666.8" width="5" height="4.4" rx="1.5" fill="#d81818"/><rect x="67.0" y="650.3" width="5" height="4.4" rx="1.5" fill="#d81818"/><path d="M82,669 L101.5,652.5" stroke="#555" stroke-width="3.2"/><path d="M82,669 L101.5,652.5" stroke="#ddd" stroke-width="1.6"/><rect x="79.5" y="666.8" width="5" height="4.4" rx="1.5" fill="#6ad03a"/><rect x="99.0" y="650.3" width="5" height="4.4" rx="1.5" fill="#d81818"/><path d="M113.5,669 L133,652.5" stroke="#555" stroke-width="3.2"/><path d="M113.5,669 L133,652.5" stroke="#ddd" stroke-width="1.6"/><rect x="111.0" y="666.8" width="5" height="4.4" rx="1.5" fill="#d81818"/><rect x="130.5" y="650.3" width="5" height="4.4" rx="1.5" fill="#6ad03a"/><path d="M149.0,661 H162.0" stroke="#333" stroke-width="2"/></svg>
<div class="t" style="left:173.8px;top:655.9px;font-size:11.9px">4-Line</div>
<div class="a" style="left:28px;top:682px;width:13px;height:13px;background:#fff;border:1px solid #333"></div><svg class="a" style="left:28px;top:682px" width="13" height="13" viewBox="28 682 13 13"><path d="M30.5,688.5 L33.3,691.3 L38.5,685.5" fill="none" stroke="#444" stroke-width="1.3"/></svg>
<svg class="a" style="left:44px;top:674px" width="130" height="30" viewBox="44 674 130 30"><path d="M50,697 L69.5,680.5" stroke="#555" stroke-width="3.2"/><path d="M50,697 L69.5,680.5" stroke="#6ad03a" stroke-width="1.6"/><rect x="47.5" y="694.8" width="5" height="4.4" rx="1.5" fill="#d81818"/><rect x="67.0" y="678.3" width="5" height="4.4" rx="1.5" fill="#d81818"/><path d="M82,697 L101.5,680.5" stroke="#555" stroke-width="3.2"/><path d="M82,697 L101.5,680.5" stroke="#ddd" stroke-width="1.6"/><rect x="79.5" y="694.8" width="5" height="4.4" rx="1.5" fill="#6ad03a"/><rect x="99.0" y="678.3" width="5" height="4.4" rx="1.5" fill="#d81818"/><path d="M113.5,697 L133,680.5" stroke="#555" stroke-width="3.2"/><path d="M113.5,697 L133,680.5" stroke="#ddd" stroke-width="1.6"/><rect x="111.0" y="694.8" width="5" height="4.4" rx="1.5" fill="#d81818"/><rect x="130.5" y="678.3" width="5" height="4.4" rx="1.5" fill="#6ad03a"/><path d="M149.0,689 H162.0" stroke="#333" stroke-width="2"/></svg>
<div class="t" style="left:173.8px;top:683.9px;font-size:11.9px">5-Line</div>
</div></div>
</div></div>
<svg class="a" style="left:0;top:0" width="1077" height="694" viewBox="0 0 1077 694">
<defs><clipPath id="vpc"><rect x="271" y="37" width="806" height="626"/></clipPath></defs>
<g clip-path="url(#vpc)">
<line x1="271" y1="423.0" x2="1077" y2="423.0" stroke="#cc6666" stroke-width="2"/>
<line x1="712.0" y1="37" x2="712.0" y2="663" stroke="#80ff80" stroke-width="2"/>
<path d="M639.67,252.73 A185.0,185.0 0 0 1 883.50,353.62" fill="none" stroke="#2f80ee" stroke-width="2.3" stroke-dasharray="12,4.5"/>
<circle cx="773.67" cy="273.97" r="48.82" fill="none" stroke="#2f80ee" stroke-width="2.3" stroke-dasharray="12,4.5"/>
<path d="M639.67,252.73 A185.0,185.0 0 1 0 883.50,353.62" fill="none" stroke="#00ff00" stroke-width="2.2"/>
<path d="M639.67,252.73 L745.54,207.75 A71.94,71.94 0 0 1 840.36,246.99 L883.50,353.62" fill="none" stroke="#00ff00" stroke-width="2.2"/>
<circle cx="712.0" cy="423.0" r="4.2" fill="#00ff00"/>
<circle cx="773.67" cy="273.97" r="3.6" fill="#00ff00"/>
<line x1="773.67" y1="273.97" x2="1006.00" y2="273.97" stroke="#ffff00" stroke-width="2"/>
<line x1="712.00" y1="423.00" x2="1006.00" y2="423.00" stroke="#ffff00" stroke-width="2"/>
<line x1="982.00" y1="226.50" x2="982.00" y2="267.97" stroke="#ffff00" stroke-width="2"/>
<polygon points="982.00,273.97 977.80,260.97 986.20,260.97" fill="#ffff00"/>
<line x1="982.00" y1="454.70" x2="982.00" y2="429.00" stroke="#ffff00" stroke-width="2"/>
<polygon points="982.00,423.00 986.20,436.00 977.80,436.00" fill="#ffff00"/>
<line x1="712.00" y1="423.00" x2="712.00" y2="305.00" stroke="#ffff00" stroke-width="2"/>
<line x1="773.67" y1="273.97" x2="773.67" y2="353.30" stroke="#ffff00" stroke-width="2"/>
<line x1="523.00" y1="330.00" x2="706.00" y2="330.00" stroke="#ffff00" stroke-width="2"/>
<polygon points="712.00,330.00 699.00,334.20 699.00,325.80" fill="#ffff00"/>
<line x1="805.50" y1="330.00" x2="779.67" y2="330.00" stroke="#ffff00" stroke-width="2"/>
<polygon points="773.67,330.00 786.67,325.80 786.67,334.20" fill="#ffff00"/>
<line x1="621.48" y1="500.71" x2="576.18" y2="539.60" stroke="#ffff00" stroke-width="2"/>
<line x1="692.27" y1="439.94" x2="847.82" y2="306.40" stroke="#ffff00" stroke-width="2"/>
<polygon points="571.63,543.50 578.76,531.85 584.23,538.22" fill="#ffff00"/>
<polygon points="852.37,302.50 845.24,314.15 839.77,307.78" fill="#ffff00"/>
<line x1="693.76" y1="198.67" x2="804.83" y2="303.34" stroke="#ffff00" stroke-width="2"/>
<polygon points="809.20,307.45 796.85,301.59 802.62,295.48" fill="#ffff00"/>
<polygon points="738.14,240.49 750.48,246.35 744.72,252.46" fill="#ffff00"/>
<line x1="773.67" y1="273.97" x2="845.26" y2="139.89" stroke="#ffff00" stroke-width="2"/>
<polygon points="807.55,210.51 805.13,223.95 797.72,220.00" fill="#ffff00"/>
<text x="485.00" y="331.00" transform="rotate(0.00 485.00 331.00)" fill="#ffff00" stroke="#626385" stroke-width="0.45" font-family="Liberation Sans" font-size="19.5" text-anchor="middle" dominant-baseline="central">12 mm</text>
<text x="982.70" y="187.30" transform="rotate(-90.00 982.70 187.30)" fill="#ffff00" stroke="#4c4c76" stroke-width="0.45" font-family="Liberation Sans" font-size="19.5" text-anchor="middle" dominant-baseline="central">29 mm</text>
<text x="656.91" y="470.29" transform="rotate(-40.65 656.91 470.29)" fill="#ffff00" stroke="#777894" stroke-width="0.45" font-family="Liberation Sans" font-size="19.5" text-anchor="middle" dominant-baseline="central">Ø72 mm</text>
<text x="658.82" y="167.82" transform="rotate(43.30 658.82 167.82)" fill="#ffff00" stroke="#494974" stroke-width="0.45" font-family="Liberation Sans" font-size="19.5" text-anchor="middle" dominant-baseline="central">Ø19 mm</text>
<text x="866.31" y="100.46" transform="rotate(-61.90 866.31 100.46)" fill="#ffff00" stroke="#3f3f6d" stroke-width="0.45" font-family="Liberation Sans" font-size="19.5" text-anchor="middle" dominant-baseline="central">R14 mm</text>
<circle cx="639.67" cy="252.73" r="4.5" fill="#00ff00"/>
<circle cx="745.54" cy="207.75" r="4.5" fill="#00ff00"/>
<circle cx="840.36" cy="246.99" r="4.5" fill="#00ff00"/>
<circle cx="883.50" cy="353.62" r="4.5" fill="#00ff00"/>
<g transform="translate(747,216.6)" stroke="#ff2a00" stroke-width="2.6" fill="none" stroke-linecap="round"><line x1="0" y1="0" x2="10.4" y2="10.4"/><path d="M-2.6,3.8 Q4,3.5 6.3,12.9"/></g>
<g transform="translate(821,247.7)" stroke="#ff2a00" stroke-width="2.6" fill="none" stroke-linecap="round"><line x1="0" y1="0" x2="10.4" y2="10.4"/><path d="M-2.6,3.8 Q4,3.5 6.3,12.9"/></g>
<g transform="translate(887,341.8)" stroke="#ff2a00" stroke-width="2.6" fill="none" stroke-linecap="round"><line x1="0" y1="0" x2="10.4" y2="10.4"/><path d="M-2.6,3.8 Q4,3.5 6.3,12.9"/></g>
<g stroke="#ff2a00" stroke-width="2.6" fill="none" stroke-linecap="round"><path d="M641.6,257.3 L651.7,263.8 M644,259 Q647.5,262 647.3,266.7"/><path d="M651.7,269.5 Q640,268 638.7,282.5"/></g>
</g></svg></body></html>
